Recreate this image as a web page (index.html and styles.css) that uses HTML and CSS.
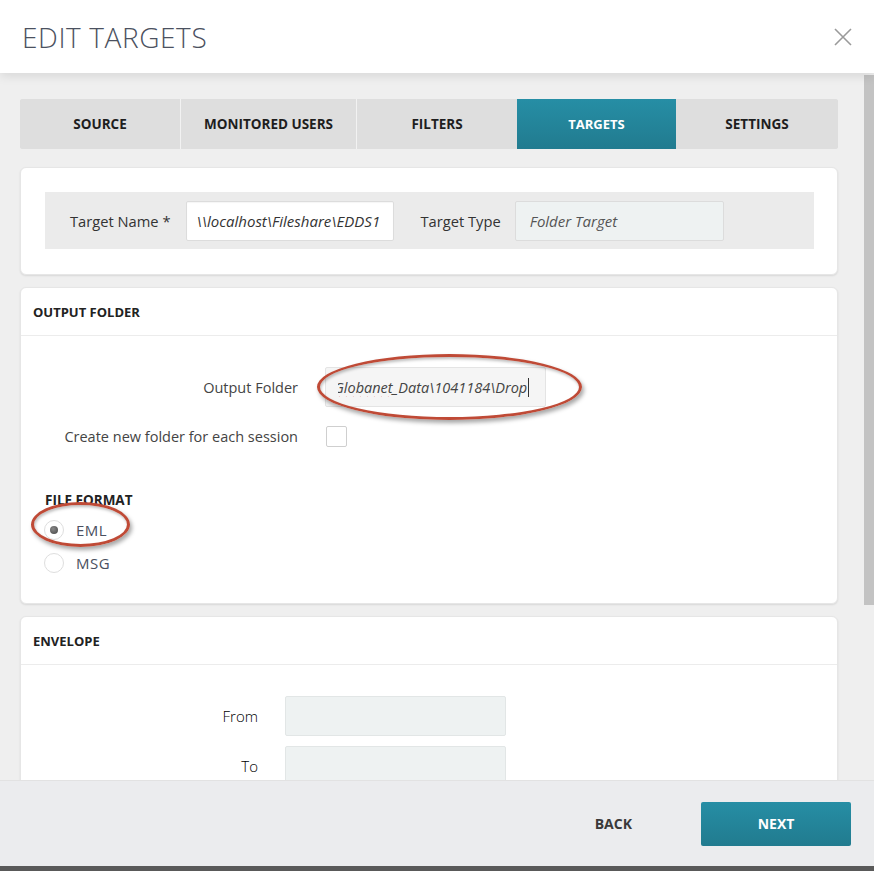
FILE: index.html
```html
<!DOCTYPE html>
<html>
<head>
<meta charset="utf-8">
<link rel="stylesheet" href="styles.css">
</head>
<body>
<div class="modal">
  <header class="header">
    <h1 class="title">EDIT TARGETS</h1>
    <svg class="close" width="18" height="18" viewBox="0 0 18 18"><path d="M1 1 L17 17 M17 1 L1 17" stroke="#9a9a9a" stroke-width="1.6" fill="none"/></svg>
  </header>
  <div class="content">
    <div class="scroll-area">
      <nav class="tabs">
        <div class="tab t1">SOURCE</div>
        <div class="tab t2">MONITORED USERS</div>
        <div class="tab t3">FILTERS</div>
        <div class="tab t4 active">TARGETS</div>
        <div class="tab t5">SETTINGS</div>
      </nav>

      <section class="card card-name">
        <div class="band">
          <span class="field-label">Target Name *</span>
          <div class="box box-white"><span class="ital">\\localhost\Fileshare\EDDS1</span></div>
          <span class="field-label type-label">Target Type</span>
          <div class="box box-tint box-type"><span class="ital muted">Folder Target</span></div>
        </div>
      </section>

      <section class="card card-output">
        <div class="card-head">OUTPUT FOLDER</div>
        <div class="card-body output-body">
          <div class="form-grid">
            <span class="label">Output Folder</span>
            <div class="box box-gray box-out"><div class="clip"><span class="ital out-text"><span class="spell">Globanet</span>_Data\1041184\Drop</span><span class="caret"></span></div></div>
            <span class="label">Create new folder for each session</span>
            <span class="checkbox"></span>
          </div>
          <div class="format">
            <div class="format-title">FILE FORMAT</div>
            <div class="radio-row"><span class="radio checked"></span><span class="radio-label">EML</span></div>
            <div class="radio-row"><span class="radio"></span><span class="radio-label">MSG</span></div>
          </div>
          <span class="mark mark-out"></span>
          <span class="mark mark-eml"></span>
        </div>
      </section>

      <section class="card card-env">
        <div class="card-head">ENVELOPE</div>
        <div class="card-body env-body">
          <div class="env-grid">
            <span class="light-label right">From</span>
            <div class="box box-tint box-env"></div>
            <span class="light-label right">To</span>
            <div class="box box-tint box-env"></div>
          </div>
        </div>
      </section>
    </div>
    <div class="scrollbar"><div class="thumb"></div></div>
  </div>
  <footer class="footer">
    <span class="back">BACK</span>
    <span class="next">NEXT</span>
  </footer>
  <div class="bottom-bar"></div>
</div>
</body>
</html>
```
FILE: styles.css
```css
* { box-sizing: border-box; }
html, body { margin: 0; padding: 0; }
body {
  width: 874px;
  height: 871px;
  overflow: hidden;
  font-family: "Open Sans", "Liberation Sans", sans-serif;
  background: #efefef;
  color: #333;
}
.modal {
  display: flex;
  flex-direction: column;
  height: 871px;
}
.header {
  height: 73px;
  flex: none;
  background: #fff;
  display: flex;
  align-items: center;
  justify-content: space-between;
  padding: 0 22px 0 22px;
  box-shadow: 0 3px 10px rgba(0,0,0,0.10);
  position: relative;
  z-index: 2;
}
.title {
  margin: 0;
  font-weight: 300;
  font-size: 28px;
  letter-spacing: 0.6px;
  color: #4b5160;
  padding-bottom: 0;
}
.content {
  flex: 1;
  display: flex;
  overflow: hidden;
  min-height: 0;
}
.scroll-area {
  flex: 1;
  padding: 26px 26px 0 20px;
  overflow: hidden;
}
.scrollbar {
  width: 10px;
  flex: none;
  padding-top: 2px;
}
.thumb {
  height: 530px;
  background: #c3c3c3;
}
.tabs {
  display: flex;
  height: 50px;
  border-radius: 3px;
  overflow: hidden;
  background: #dcdcdc;
}
.tab {
  display: flex;
  align-items: center;
  justify-content: center;
  font-weight: 700;
  font-size: 13.5px;
  color: #1e1e1e;
  background: #dedede;
}
.tab + .tab { border-left: 1px solid #f2f2f2; }
.t1 { width: 160px; }
.t2 { width: 176px; }
.t3 { width: 161px; }
.t4 { width: 159px; }
.t5 { flex: 1; }
.tab.active {
  background: linear-gradient(#268ea5, #217b8f);
  color: #fff;
  border-left: none;
  font-size: 13px;
}
.tab.active + .tab { border-left: none; }
.card {
  background: #fff;
  border-radius: 6px;
  box-shadow: 0 1px 2px rgba(0,0,0,0.10);
  border: 1px solid #e6e6e6;
}
.card-name {
  margin-top: 18px;
  padding: 24px 23px 25px 24px;
}
.band {
  background: #ebebeb;
  height: 57px;
  display: flex;
  align-items: center;
  padding-left: 25px;
}
.field-label {
  font-size: 14.7px;
  color: #333;
}
.type-label { margin-left: 27px; }
.box {
  border: 1px solid #dcdcdc;
  border-radius: 2px;
  height: 40px;
  display: flex;
  align-items: center;
  padding: 0 10px;
}
.box-white {
  background: #fff;
  width: 208px;
  margin-left: 15px;
  box-shadow: inset 0 1px 1px rgba(0,0,0,0.04);
  overflow: hidden;
}
.box-tint { background: #eef2f2; }
.box-type { width: 209px; margin-left: 14px; padding-left: 14px; }
.ital {
  font-style: italic;
  font-size: 15px;
  color: #333;
  white-space: nowrap;
}
.muted { color: #555; }
.card-output { margin-top: 12px; height: 317px; }
.card-head {
  height: 48px;
  display: flex;
  align-items: center;
  padding-left: 12px;
  font-weight: 700;
  font-size: 13px;
  color: #222;
  border-bottom: 1px solid #ececec;
}
.card-body { position: relative; }
.output-body { padding-top: 31px; }
.form-grid {
  display: grid;
  grid-template-columns: 277px 221px;
  column-gap: 27px;
  row-gap: 19px;
  align-items: center;
  justify-items: end;
}
.form-grid > .box, .form-grid > .checkbox { justify-self: start; }
.label {
  font-size: 14.5px;
  color: #444;
}
.box-gray {
  background: #f5f5f5;
  height: 40px;
  width: 221px;
  border-color: #e4e4e4;
  padding: 0 12px;
}
.clip {
  overflow: hidden;
  white-space: nowrap;
  display: flex;
  align-items: center;
  width: 100%;
}
.out-text {
  font-size: 14.5px;
  color: #444;
  margin-left: -4px;
  flex: none;
}
.spell {
  text-decoration: underline wavy #e03030;
  text-decoration-thickness: 1px;
  text-underline-offset: 3px;
}
.caret {
  display: inline-block;
  width: 1px;
  height: 19px;
  background: #333;
  margin-left: 1px;
  flex: none;
}
.checkbox {
  width: 21px;
  height: 21px;
  border: 1px solid #cfcfcf;
  border-radius: 2px;
  background: #fff;
  margin-left: 1px;
}
.format { padding: 44px 0 0 24px; }
.format-title {
  font-weight: 700;
  font-size: 13.5px;
  color: #222;
  margin-bottom: 4px;
}
.radio-row {
  display: flex;
  align-items: center;
  height: 33px;
  margin-left: -1px;
}
.radio {
  width: 20px;
  height: 20px;
  border-radius: 50%;
  border: 1px solid #dedede;
  background: #fff;
  display: flex;
  align-items: center;
  justify-content: center;
}
.radio.checked::after {
  content: "";
  width: 8px;
  height: 8px;
  border-radius: 50%;
  background: radial-gradient(circle at 40% 35%, #888, #444);
}
.radio-label {
  margin-left: 12px;
  font-size: 15px;
  color: #4a5060;
  letter-spacing: 0.5px;
}
.mark {
  position: absolute;
  border: 3.5px solid #bf4a36;
  border-radius: 50%;
  box-shadow: 2px 3px 4px rgba(0,0,0,0.35), inset 1px 2px 3px rgba(0,0,0,0.25);
}
.mark-out { left: 296px; top: 18px; width: 265px; height: 66px; }
.mark-eml { left: 10px; top: 166px; width: 99px; height: 45px; }
.card-env { margin-top: 12px; height: 200px; }
.env-body { padding-top: 31px; }
.env-grid {
  display: grid;
  grid-template-columns: 237px 221px;
  column-gap: 27px;
  row-gap: 10px;
  align-items: center;
}
.light-label {
  font-size: 15px;
  font-weight: 300;
  color: #000;
}
.right { justify-self: end; }
.box-env { width: 221px; height: 40px; border-color: #e2e6e6; }
.footer {
  height: 86px;
  flex: none;
  background: #ebecee;
  display: flex;
  align-items: center;
  justify-content: flex-end;
  padding-right: 23px;
  border-top: 1px solid #e2e2e2;
  position: relative;
  z-index: 2;
}
.back {
  font-weight: 700;
  font-size: 14px;
  color: #3a3a3a;
  margin-right: 69px;
}
.next {
  width: 150px;
  height: 44px;
  display: flex;
  align-items: center;
  justify-content: center;
  background: linear-gradient(#268ea5, #217b8f);
  color: #fff;
  font-weight: 700;
  font-size: 14px;
  border-radius: 2px;
}
.bottom-bar {
  height: 5px;
  flex: none;
  background: #595959;
}
```
